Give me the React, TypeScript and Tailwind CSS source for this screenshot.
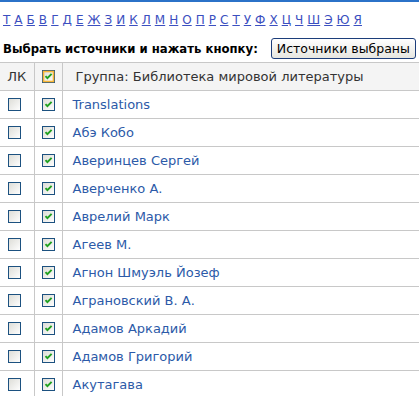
import React from "react";

const letters = ["T","А","Б","В","Г","Д","Е","Ж","З","И","К","Л","М","Н","О","П","Р","С","Т","У","Ф","Х","Ц","Ч","Ш","Э","Ю","Я"];
const names = [
  "Translations",
  "Абэ Кобо",
  "Аверинцев Сергей",
  "Аверченко А.",
  "Аврелий Марк",
  "Агеев М.",
  "Агнон Шмуэль Йозеф",
  "Аграновский В. А.",
  "Адамов Аркадий",
  "Адамов Григорий",
  "Акутагава",
];

function Box({ checked, hover }: { checked?: boolean; hover?: boolean }) {
  return (
    <svg width="13" height="13" viewBox="0 0 13 13" className="block">
      <defs>
        <linearGradient id="cbg" x1="0" y1="0" x2="1" y2="1">
          <stop offset="0" stopColor="#dcdcd6" />
          <stop offset="1" stopColor="#ffffff" />
        </linearGradient>
      </defs>
      <rect x="0.5" y="0.5" width="12" height="12" fill="url(#cbg)" stroke="#1c5180" />
      {hover && <rect x="1.5" y="1.5" width="10" height="10" fill="none" stroke="#f8b636" strokeWidth="1.6" />}
      {checked && (
        <path d="M3.5 6.2 L5.4 8.2 L9.6 3.8" fill="none" stroke="#21a121" strokeWidth="1.9" />
      )}
    </svg>
  );
}

export default function App() {
  return (
    <div className="w-[419px] h-[396px] overflow-hidden bg-white font-['DejaVu_Sans',sans-serif]">
      <div className="h-[2px] bg-[#2b72c8]" />
      <div className="pl-[3px] mt-[11px] text-[12px] leading-[15px] tracking-[0.1px] text-[#3b4fc0] whitespace-nowrap">
        {letters.map((l, i) => (
          <React.Fragment key={i}>
            <span className="underline">{l}</span>
            {i < letters.length - 1 ? " " : ""}
          </React.Fragment>
        ))}
      </div>
      <div className="flex items-baseline mt-[10px] pl-[3px] whitespace-nowrap">
        <span className="text-[11.7px] font-bold text-black">Выбрать источники и нажать кнопку:</span>
        <button className="ml-[13px] w-[145px] h-[21px] px-0 text-center text-[12.5px] leading-[19px] text-black border border-[#1c3d7a] rounded-[3px] bg-gradient-to-b from-[#ffffff] to-[#e6e6e0]">
          Источники выбраны
        </button>
      </div>
      <table className="mt-[3px] w-[419px] border-collapse text-[13px]">
        <thead>
          <tr className="bg-[#f4f4f4] h-[28px]">
            <th className="w-[34px] border-t border-b border-r border-[#c8c8c8] font-normal text-[#333] text-center p-0">ЛК</th>
            <th className="w-[28px] border-t border-b border-r border-[#c8c8c8] p-0">
              <div className="flex justify-center"><Box checked hover /></div>
            </th>
            <th className="border-t border-b border-[#c8c8c8] font-normal text-left pl-[13px] text-[#333] p-0">
              Группа: Библиотека мировой литературы
            </th>
          </tr>
        </thead>
        <tbody>
          {names.map((n) => (
            <tr key={n} className="h-[28px]">
              <td className="border-b border-r border-[#c8c8c8] p-0 pl-[8px]"><Box /></td>
              <td className="border-b border-r border-[#c8c8c8] p-0">
                <div className="flex justify-center"><Box checked /></div>
              </td>
              <td className="border-b border-[#c8c8c8] p-0 pl-[10px] text-[#2c5aa8]">{n}</td>
            </tr>
          ))}
        </tbody>
      </table>
    </div>
  );
}
